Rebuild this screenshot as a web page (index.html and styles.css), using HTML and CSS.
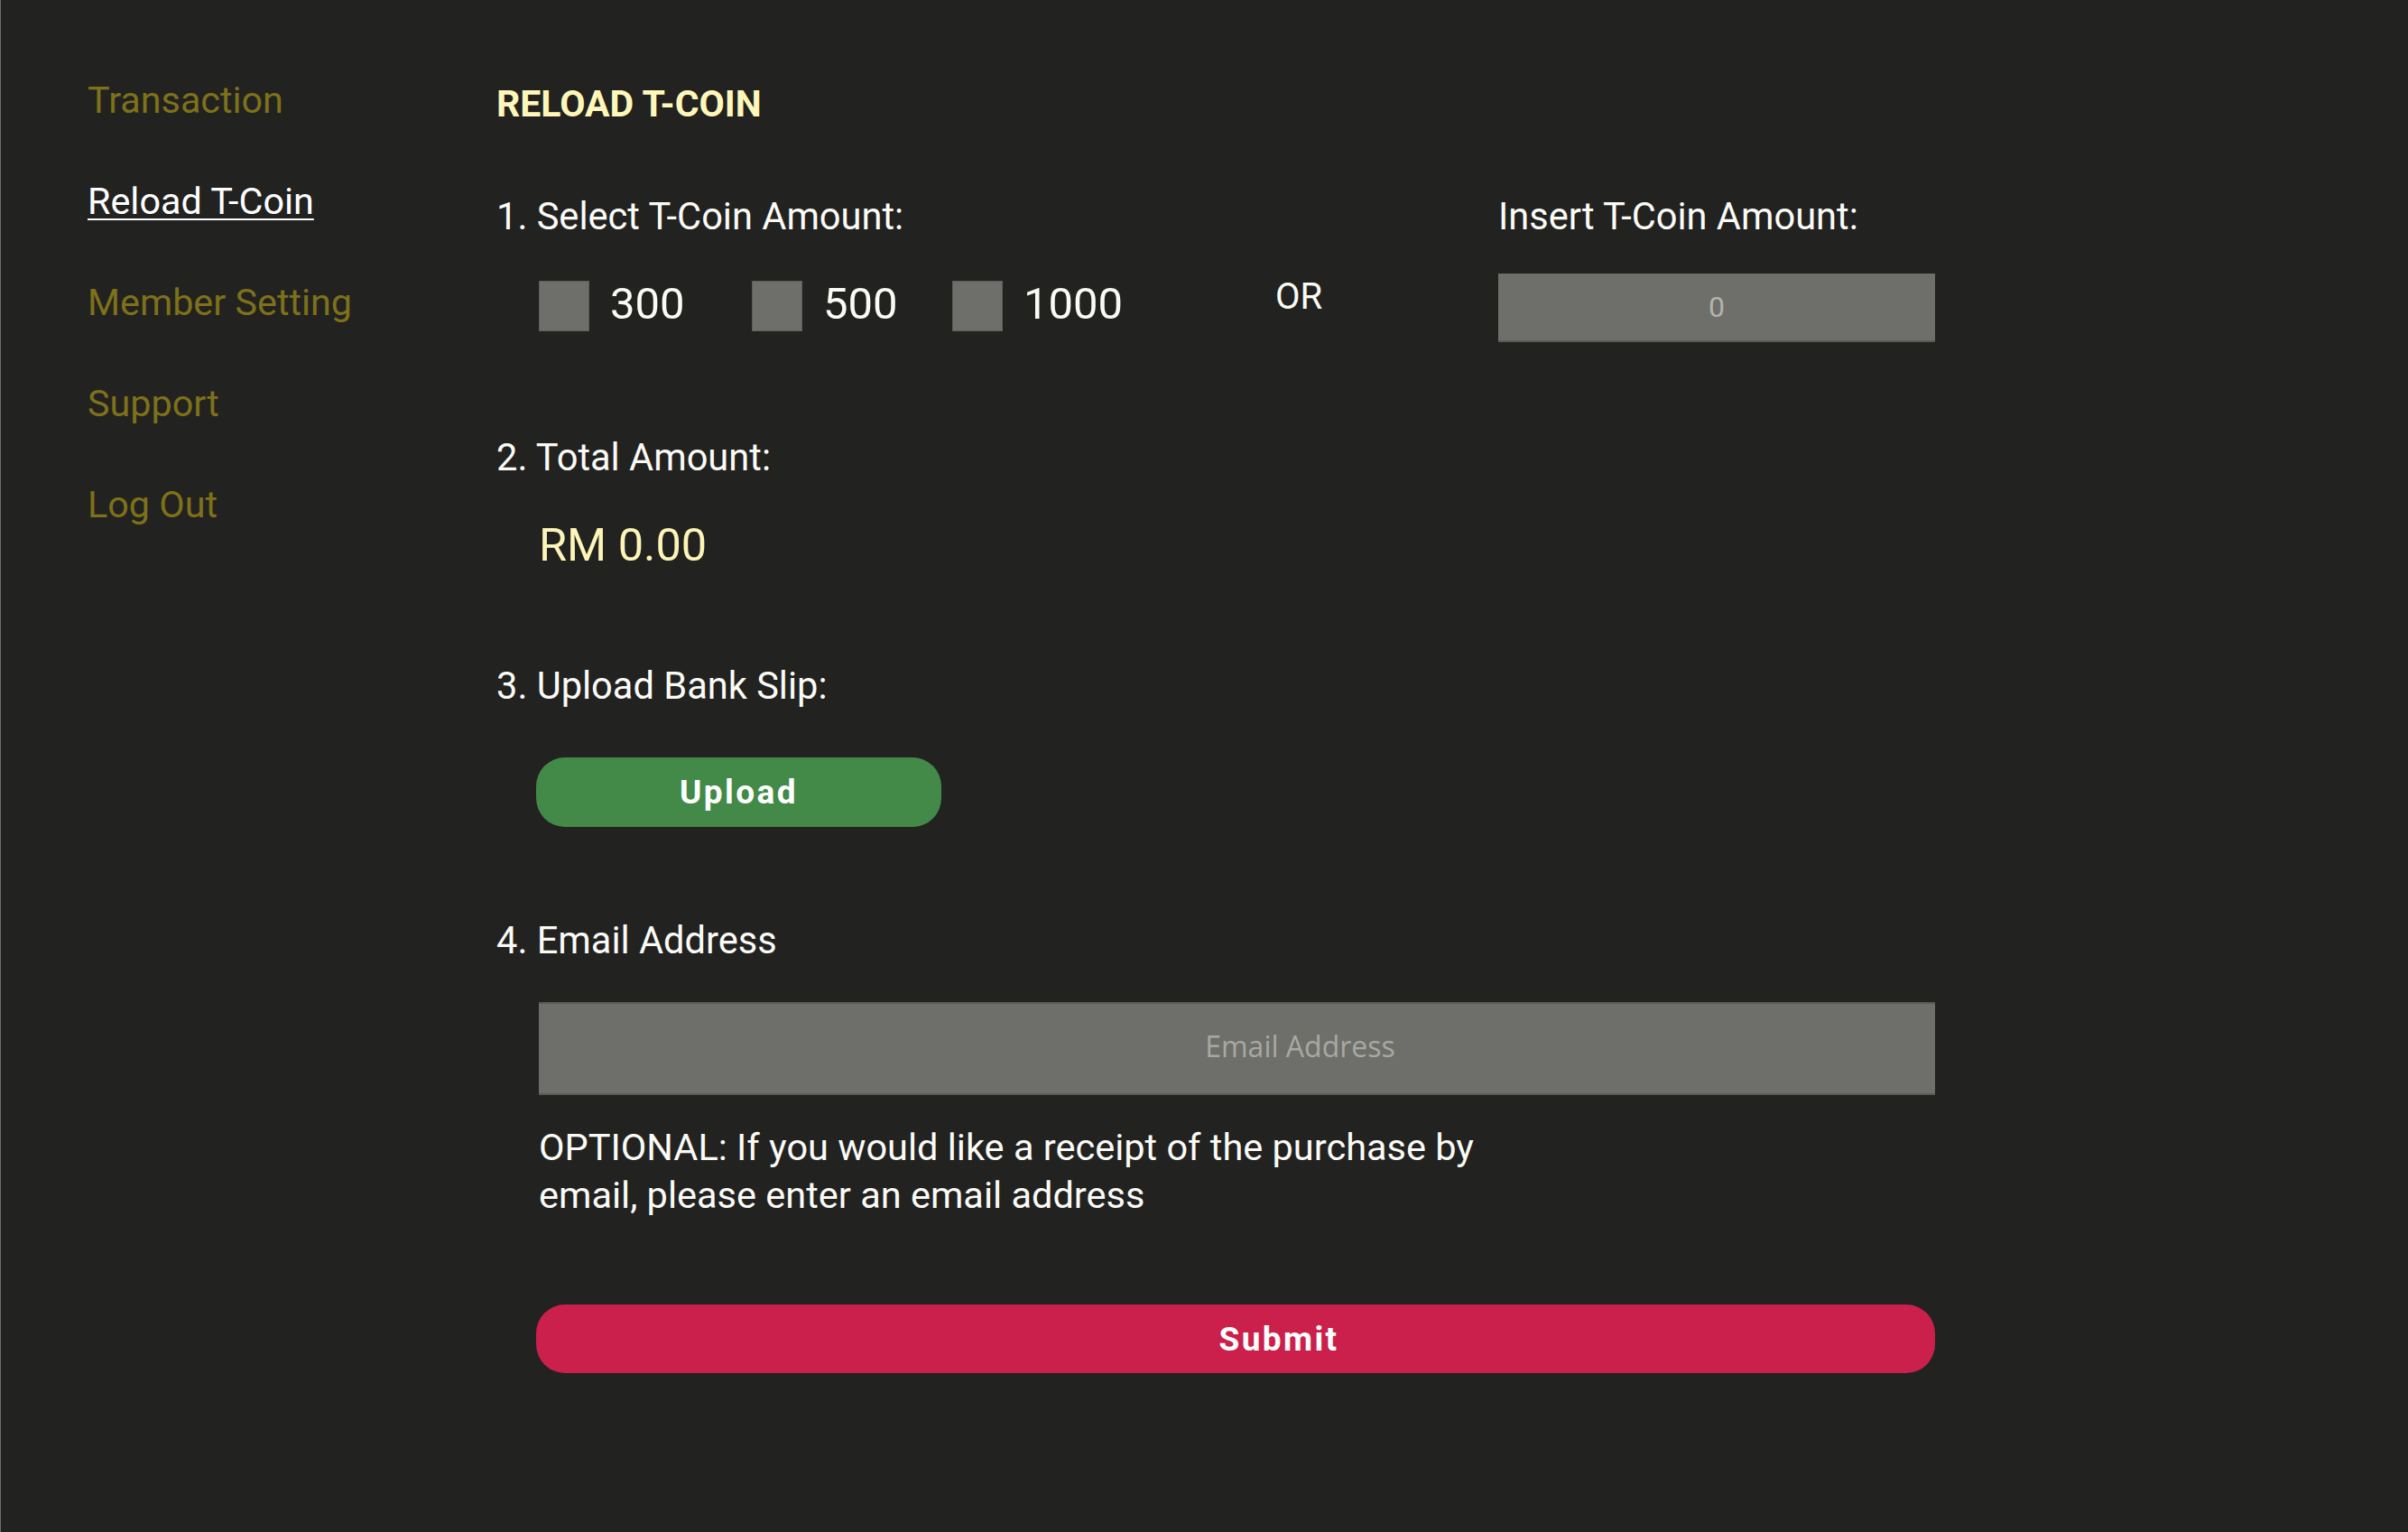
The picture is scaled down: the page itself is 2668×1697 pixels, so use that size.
FILE: index.html
```html
<!DOCTYPE html>
<html lang="en">
<head>
<meta charset="utf-8">
<title>Reload T-Coin</title>
<link rel="stylesheet" href="styles.css">
</head>
<body>
<div class="page">
  <nav class="sidebar">
    <a class="nav-item" href="#">Transaction</a>
    <a class="nav-item active" href="#">Reload T-Coin</a>
    <a class="nav-item" href="#">Member Setting</a>
    <a class="nav-item" href="#">Support</a>
    <a class="nav-item" href="#">Log Out</a>
  </nav>
  <main class="main">
    <h1 class="title">RELOAD T-COIN</h1>

    <div class="row-select">
      <div class="select-left">
        <div class="label">1. Select T-Coin Amount:</div>
        <div class="choices">
          <label class="choice"><span class="box"></span><span class="choice-text">300</span></label>
          <label class="choice"><span class="box"></span><span class="choice-text">500</span></label>
          <label class="choice"><span class="box"></span><span class="choice-text">1000</span></label>
          <span class="or">OR</span>
        </div>
      </div>
      <div class="select-right">
        <div class="label">Insert T-Coin Amount:</div>
        <div class="field amount">0</div>
      </div>
    </div>

    <div class="label label-total">2. Total Amount:</div>
    <div class="total">RM 0.00</div>

    <div class="label label-upload">3. Upload Bank Slip:</div>
    <button class="btn btn-upload" type="button">Upload</button>

    <div class="label label-email">4. Email Address</div>
    <div class="field email">Email Address</div>
    <p class="note">OPTIONAL: If you would like a receipt of the purchase by email, please enter an email address</p>

    <button class="btn btn-submit" type="button">Submit</button>
  </main>
</div>
</body>
</html>
```
FILE: styles.css
```css
html, body {
  margin: 0;
  padding: 0;
  background: #222221;
}

body {
  font-family: Roboto, "Liberation Sans", sans-serif;
  color: #fbfbf6;
}

.page {
  display: flex;
  min-height: 1697px;
  border-left: 1px solid #6e6e6c;
  box-sizing: border-box;
}

.sidebar {
  width: 549px;
  box-sizing: border-box;
  padding: 87px 0 0 96px;
  display: flex;
  flex-direction: column;
  align-items: flex-start;
  gap: 64px;
  flex-shrink: 0;
}

.nav-item {
  font-size: 41.3px;
  line-height: 48px;
  color: #7e7119;
  text-decoration: none;
}

.nav-item.active {
  color: #ffffff;
  text-decoration: underline;
  text-decoration-thickness: 2px;
  text-underline-offset: 5px;
}

.main {
  flex: 1;
  padding-top: 91px;
}

.title {
  margin: 0;
  font-size: 41px;
  line-height: 48px;
  font-weight: 700;
  color: #fff7b9;
}

.label {
  font-size: 41.6px;
  line-height: 48px;
  color: #fbfbf6;
}

.row-select {
  display: flex;
  margin-top: 77px;
}

.select-left {
  width: 1110px;
  flex-shrink: 0;
}

.choices {
  display: grid;
  grid-template-columns: 236px 222px 358px auto;
  align-items: start;
  margin-top: 47px;
  padding-left: 47px;
}

.choice {
  display: flex;
  align-items: flex-start;
  gap: 23px;
}

.box {
  width: 56px;
  height: 56px;
  box-sizing: border-box;
  background: #6e6f6a;
  border: 1px solid #5d5d5a;
}

.choice-text {
  font-size: 49px;
  line-height: 56px;
  margin-top: -2px;
}

.or {
  font-size: 40px;
  line-height: 48px;
  margin-top: -6px;
}

.select-right {
  width: 484px;
}

.field {
  background: #6e6f6a;
  border-bottom: 2px solid #5a5a57;
  box-sizing: border-box;
  display: flex;
  align-items: center;
  justify-content: center;
}

.amount {
  margin-top: 39px;
  height: 76px;
  font-size: 32px;
  color: #b3b3ae;
}

.label-total {
  margin-top: 104px;
}

.total {
  margin-top: 44px;
  padding-left: 47px;
  font-size: 50.5px;
  line-height: 58px;
  color: #fdf4b7;
}

.label-upload {
  margin-top: 103px;
}

.btn {
  display: block;
  border: none;
  border-radius: 32px;
  color: #ffffff;
  font-family: Roboto, "Liberation Sans", sans-serif;
  font-weight: 700;
  font-size: 37px;
  letter-spacing: 2.4px;
  cursor: pointer;
}

.btn-upload {
  margin: 55px 0 0 44px;
  width: 449px;
  height: 77px;
  background: #438a48;
}

.label-email {
  margin-top: 102px;
}

.email {
  margin: 44px 0 0 47px;
  width: 1547px;
  height: 103px;
  padding: 0 0 6px 140px;
  font-family: "Open Sans", sans-serif;
  font-size: 32px;
  color: #a8a8a3;
  border-top: 2px solid #5a5a57;
}

.note {
  margin: 31px 0 0 47px;
  max-width: 1100px;
  font-size: 41.5px;
  line-height: 53px;
  color: #fbfbf6;
}

.btn-submit {
  margin: 95px 0 0 44px;
  width: 1550px;
  height: 76px;
  padding: 0 0 0 96px;
  background: #cb1f4c;
}
```
